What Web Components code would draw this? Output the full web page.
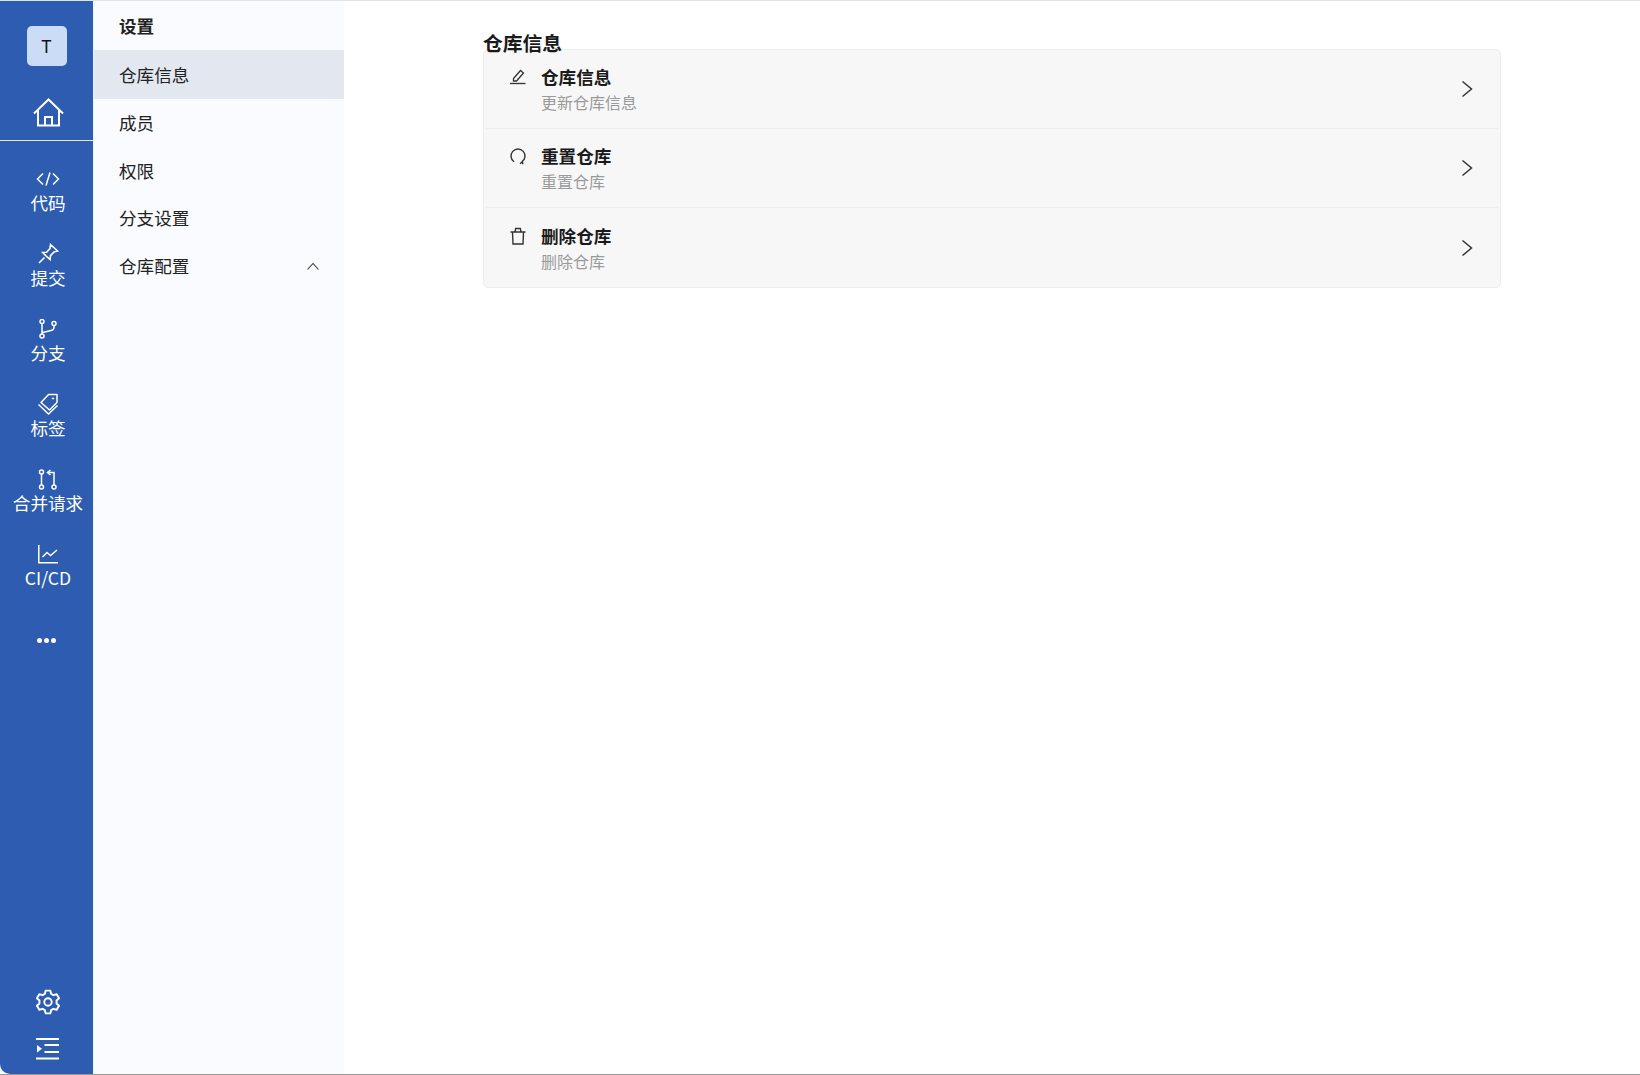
<!DOCTYPE html>
<html>
<head>
<meta charset="utf-8">
<title>仓库信息</title>
<style>
  html, body { margin: 0; height: 100%; background: #fff; overflow: hidden; }
  body { font-family: "Noto Sans CJK SC", "Noto Sans", sans-serif; }
</style>
</head>
<body>
<app-shell>
  <rail-nav slot="rail"></rail-nav>
  <settings-menu slot="menu"></settings-menu>
  <section-page slot="main" heading="仓库信息">
    <setting-row icon="edit" name="仓库信息" note="更新仓库信息"></setting-row>
    <setting-row icon="reset" name="重置仓库" note="重置仓库"></setting-row>
    <setting-row icon="trash" name="删除仓库" note="删除仓库"></setting-row>
  </section-page>
</app-shell>

<script>
const RAIL_ICONS = {
  home: '<svg width="33" height="32" viewBox="0 0 33 32" fill="none" stroke="#fff" stroke-width="2"><path d="M2 16.5 16.5 2.5 31 16.5"/><path d="M6 13v15.5h21V13"/><path d="M13 28.5V20h7v8.5"/></svg>',
  code: '<svg width="24" height="16" viewBox="0 0 24 16" fill="none" stroke="#fff" stroke-width="1.5"><path d="M7 2.5 1.5 8 7 13.5M17 2.5 22.5 8 17 13.5M14 1.5 10 14.5"/></svg>',
  pin: '<svg width="22" height="22" viewBox="0 0 22 22" fill="none" stroke="#fff" stroke-width="1.6"><path d="M13.5 1.5 20.5 8l-3.2.8-3.8 3.8-.4 4L9 12.9 5.6 9.500l4-.3 3.400-3.700z"/><path d="M7.500 14.500 2 20"/></svg>',
  branch: '<svg width="20" height="20" viewBox="0 0 20 20" fill="none" stroke="#fff" stroke-width="1.500"><circle cx="4" cy="2.500" r="2"/><circle cx="4" cy="17" r="2"/><circle cx="16" cy="4.500" r="2"/><path d="M4 4.500V15M4.500 13.500 13 11.500c2-.5 3-1.500 3-3V6.500"/></svg>',
  tag: '<svg width="22" height="22" viewBox="0 0 22 22" fill="none" stroke="#fff" stroke-width="1.500"><path d="M11.500 1.500h8.500v8l-7.500 7.500-8.500-7.500z" stroke-linejoin="round"/><path d="M1.500 11.500 11.500 21 20.500 12.500"/><circle cx="16" cy="5.500" r=".7" fill="#fff" stroke-width=".8"/></svg>',
  merge: '<svg width="20" height="21" viewBox="0 0 20 21" fill="none" stroke="#fff" stroke-width="1.500"><circle cx="3.500" cy="3" r="2"/><circle cx="3.500" cy="18" r="2"/><circle cx="16" cy="18" r="2"/><path d="M3.500 5v11M16 16V3.500H10.500"/><path d="M12.500 1 9.500 3.500l3 2.500"/></svg>',
  chart: '<svg width="20" height="19" viewBox="0 0 20 19" fill="none" stroke="#fff" stroke-width="1.500"><path d="M.8 0v17.800H20"/><path d="M4.500 12 9 7.500l3.500 3L19 5"/></svg>',
  gear: '<svg width="26" height="26" viewBox="0 0 24 24" fill="none" stroke="#fff" stroke-width="1.800" stroke-linejoin="round"><circle cx="12" cy="12" r="3.400"/><path d="M9.800 1.500h4.400l.7 3 2.100 1.200 3-.9 2.200 3.800-2.300 2.100v2.600l2.300 2.100-2.200 3.800-3-.9-2.100 1.200-.7 3H9.800l-.7-3-2.100-1.200-3 .9-2.200-3.800 2.300-2.100v-2.600L1.800 8.600 4 4.800l3 .9 2.100-1.200z"/></svg>',
  collapse: '<svg width="24" height="22" viewBox="0 0 24 22" fill="#fff"><rect y="0" width="23" height="2"/><rect x="8.500" y="6" width="14.500" height="2"/><rect x="8.500" y="13" width="14.500" height="2"/><rect y="19.500" width="23" height="2"/><path d="M1 7v7.500l5-3.700z"/></svg>'
};

const ROW_ICONS = {
  edit: '<svg width="18" height="18" viewBox="0 0 18 18" fill="none" stroke="#333" stroke-width="1.300"><path d="M4.500 10.500 11.500 2.500l3 2.500-7 8H4.500z"/><path d="M1 15.500h15.500"/></svg>',
  reset: '<svg width="18" height="18" viewBox="0 0 18 18" fill="none" stroke="#333" stroke-width="1.400"><path d="M5 14.800A7 7 0 1 1 13 14.800"/><path d="M11 16.700 13.300 14.800l.7 2.400"/></svg>',
  trash: '<svg width="18" height="18" viewBox="0 0 18 18" fill="none" stroke="#333" stroke-width="1.400"><path d="M1.500 5h15M3.500 5l.5 12h10l.5-12M6 5l.7-3.500h4.600L12 5"/></svg>'
};

class AppShell extends HTMLElement {
  constructor() {
    super();
    this._shadowRoot = this.attachShadow({ mode: "open" });
    this._shadowRoot.innerHTML = `
      <style>
        :host {
          display: flex;
          height: 1075px;
          box-sizing: border-box;
          border-top: 1px solid #e3e3e3;
          border-bottom: 1px solid #999;
        }
        ::slotted(section-page) {
          flex: 1;
        }
      </style>
      <slot name="rail"></slot>
      <slot name="menu"></slot>
      <slot name="main"></slot>
    `;
  }
}

class RailNav extends HTMLElement {
  constructor() {
    super();
    this._shadowRoot = this.attachShadow({ mode: "open" });
    const links = [
      ["code", "代码", 16],
      ["pin", "提交", 22],
      ["branch", "分支", 20],
      ["tag", "标签", 22],
      ["merge", "合并请求", 21],
      ["chart", "CI/CD", 19],
    ];
    const items = links.map(([icon, label]) => `
      <a class="link"><span class="glyph">${RAIL_ICONS[icon]}</span><span>${label}</span></a>
    `).join("");
    this._shadowRoot.innerHTML = `
      <style>
        :host {
          display: flex;
          flex-direction: column;
          align-items: center;
          width: 93px;
          height: 100%;
          background: #2d5cb0;
          color: #fff;
          border-bottom-left-radius: 10px;
          font-size: 17.6px;
        }
        .avatar {
          width: 40px;
          height: 40px;
          margin-top: 25px;
          border-radius: 5px;
          background: #cbdcf6;
          color: #111;
          font: 17.6px "Noto Sans", sans-serif;
          display: flex;
          align-items: center;
          justify-content: center;
          margin-right: 0;
        }
        .home {
          height: 32px;
          margin-top: 31px;
          margin-left: 3px;
        }
        .rule {
          width: 100%;
          border-top: 1px solid #dfe6f2;
          margin-top: 11px;
          margin-bottom: 27px;
        }
        .link {
          display: flex;
          flex-direction: column;
          align-items: center;
          height: 75px;
          margin-left: 3px;
          line-height: 26px;
        }
        .glyph {
          height: 22px;
          display: flex;
          align-items: center;
          justify-content: center;
        }
        .more {
          display: flex;
          gap: 2px;
          margin-top: 20px;
        }
        .more i {
          width: 5px;
          height: 5px;
          border-radius: 50%;
          background: #fff;
        }
        .bottom {
          margin-top: auto;
          display: flex;
          flex-direction: column;
          align-items: center;
          gap: 23px;
          margin-left: 2px;
          margin-bottom: 14px;
        }
        svg { display: block; }
      </style>
      <div class="avatar">T</div>
      <div class="home">${RAIL_ICONS.home}</div>
      <div class="rule"></div>
      ${items}
      <div class="more"><i></i><i></i><i></i></div>
      <div class="bottom">
        ${RAIL_ICONS.gear}
        ${RAIL_ICONS.collapse}
      </div>
    `;
  }
}

class SettingsMenu extends HTMLElement {
  constructor() {
    super();
    this._shadowRoot = this.attachShadow({ mode: "open" });
    this._shadowRoot.innerHTML = `
      <style>
        :host {
          display: block;
          width: 250px;
          height: 100%;
          box-sizing: content-box;
          border-left: 1px solid #f0f3f8;
          background: #f9fbfe;
          color: #222;
          font-size: 17.6px;
        }
        .title {
          height: 49px;
          line-height: 50px;
          padding-left: 25px;
          font-weight: 700;
        }
        .item {
          height: 47.600px;
          line-height: 47.600px;
          padding: 0 25px;
          display: flex;
          justify-content: space-between;
          align-items: center;
        }
        .item.active {
          height: 49px;
          line-height: 49px;
          background: #e2e7f0;
        }
        svg { display: block; }
      </style>
      <div class="title">设置</div>
      <div class="item active">仓库信息</div>
      <div class="item">成员</div>
      <div class="item">权限</div>
      <div class="item">分支设置</div>
      <div class="item">仓库配置
        <svg width="12" height="8" viewBox="0 0 12 8" fill="none" stroke="#333" stroke-width="1.100"><path d="M.5 7.500 6 1.500l5.500 6"/></svg>
      </div>
    `;
  }
}

class SectionPage extends HTMLElement {
  constructor() {
    super();
    this._shadowRoot = this.attachShadow({ mode: "open" });
    this._shadowRoot.innerHTML = `
      <style>
        :host {
          display: block;
          padding-left: 139px;
          padding-right: 139px;
          color: #1a1a1a;
        }
        h2 {
          margin: 0;
          padding-top: 27px;
          height: 48px;
          box-sizing: border-box;
          font-size: 19.800px;
          line-height: 29px;
          font-weight: 700;
        }
        .card {
          box-sizing: border-box;
          width: 1018px;
          border: 1px solid #ececec;
          border-radius: 5px;
          background: #f7f7f7;
          padding: 0 2px;
        }
      </style>
      <h2></h2>
      <div class="card"><slot></slot></div>
    `;
    this._shadowRoot.querySelector("h2").textContent = this.getAttribute("heading");
  }
}

class SettingRow extends HTMLElement {
  constructor() {
    super();
    this._shadowRoot = this.attachShadow({ mode: "open" });
    this._shadowRoot.innerHTML = `
      <style>
        :host {
          display: flex;
          align-items: center;
          box-sizing: border-box;
          height: 79px;
          padding: 0 25px 0 23px;
          border-bottom: 1px solid #ececec;
        }
        :host(:last-child) {
          border-bottom: 0;
        }
        .icon {
          width: 18px;
          height: 18px;
          margin-top: -24px;
          margin-right: 14px;
          flex: none;
        }
        .text {
          flex: 1;
        }
        .name {
          font-size: 17.600px;
          line-height: 26px;
          font-weight: 700;
        }
        .note {
          font-size: 16px;
          line-height: 24px;
          color: #9a9a9a;
        }
        svg { display: block; }
      </style>
      <span class="icon">${ROW_ICONS[this.getAttribute("icon")]}</span>
      <div class="text">
        <div class="name">${this.getAttribute("name")}</div>
        <div class="note">${this.getAttribute("note")}</div>
      </div>
      <svg width="12" height="18" viewBox="0 0 12 18" fill="none" stroke="#333" stroke-width="1.500"><path d="M1.500 1.500 10.500 9 1.500 16.500"/></svg>
    `;
  }
}

customElements.define("app-shell", AppShell);
customElements.define("rail-nav", RailNav);
customElements.define("settings-menu", SettingsMenu);
customElements.define("section-page", SectionPage);
customElements.define("setting-row", SettingRow);
</script>
</body>
</html>
